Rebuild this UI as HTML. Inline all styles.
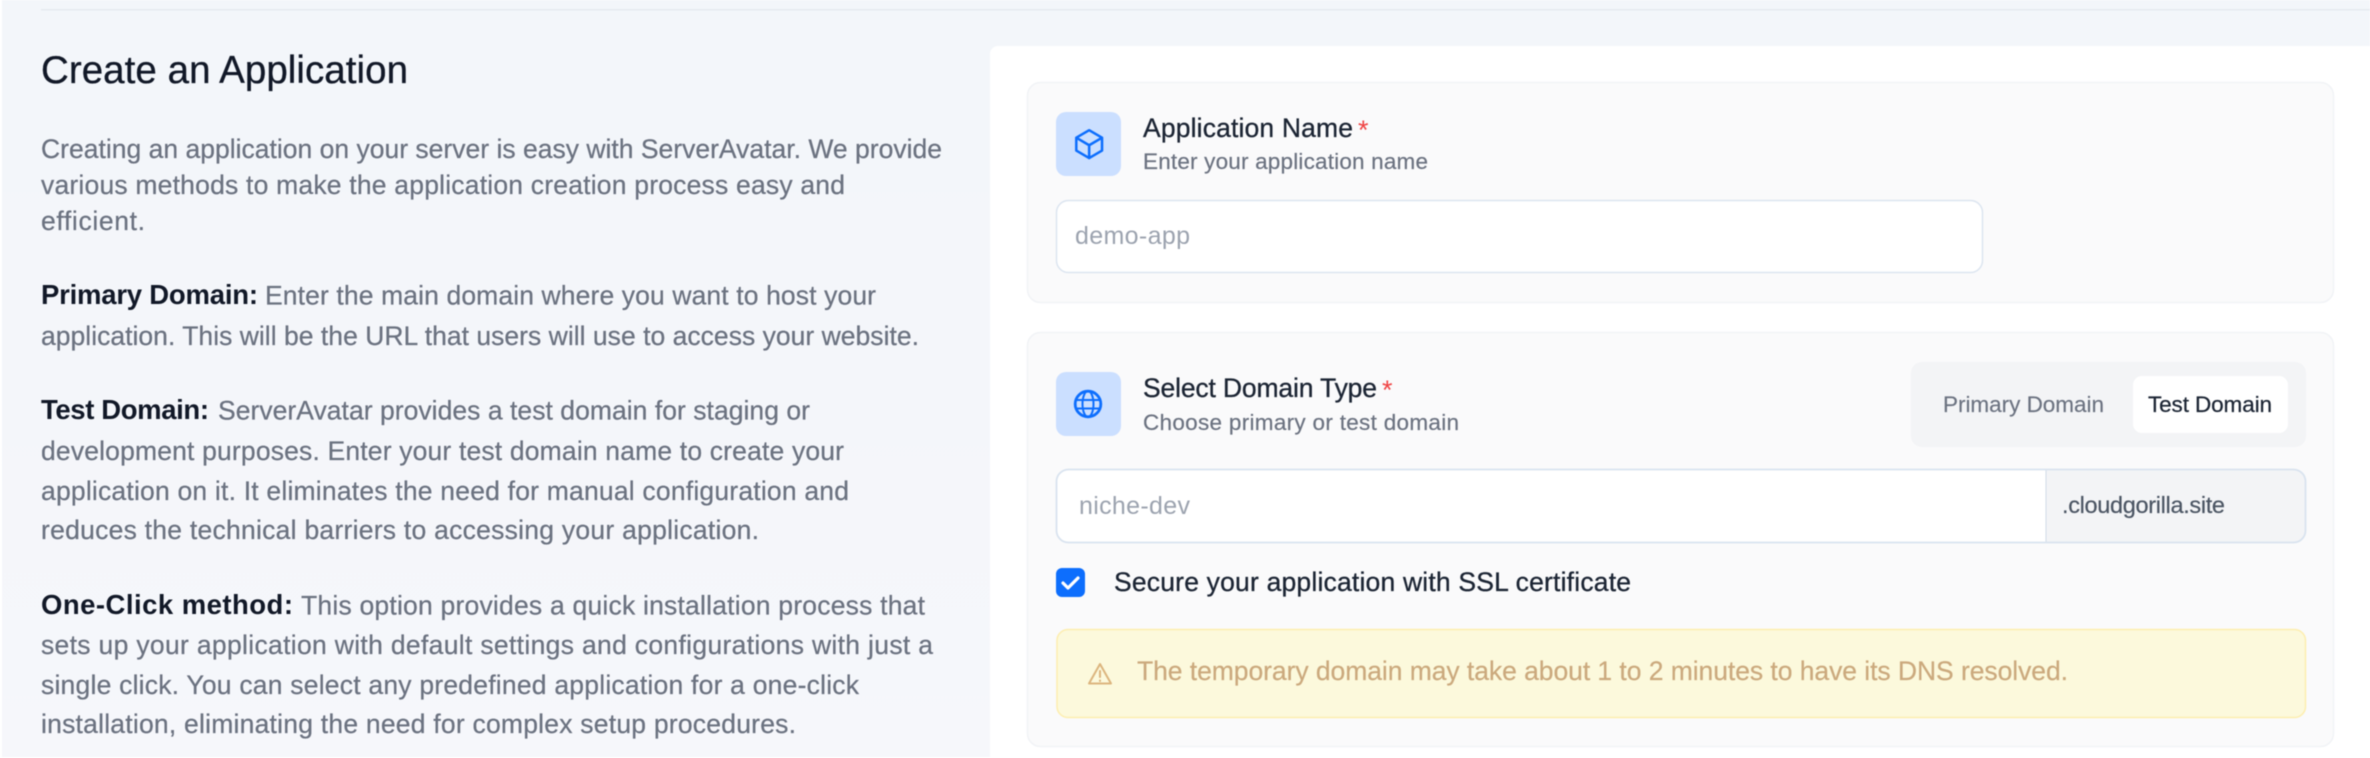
<!DOCTYPE html>
<html><head><meta charset="utf-8"><title>Create an Application</title>
<style>
html,body{margin:0;padding:0;width:2370px;height:758px;overflow:hidden;background:#fff}
svg{display:block;font-family:"Liberation Sans",sans-serif;filter:blur(.4px)}
.p{font-size:26.5px;fill:#6b7280;stroke:#6b7280;stroke-width:.25px}
.b{font-size:27.5px;fill:#111827;font-weight:700}
.t{font-size:26.5px;fill:#1b2433;stroke:#1b2433;stroke-width:.3px}
.s{font-size:22.5px;fill:#6b7280;stroke:#6b7280;stroke-width:.2px}
</style></head><body>
<svg width="2370" height="758" viewBox="0 0 2370 758" xmlns="http://www.w3.org/2000/svg">
<defs><linearGradient id="bg" x1="0" y1="0" x2="0" y2="1"><stop offset="0" stop-color="#f3f6fa"/><stop offset="1" stop-color="#f6f7fb"/></linearGradient></defs>
<rect x="2" y="0" width="2368" height="757" fill="url(#bg)"/>
<rect x="41" y="9" width="2329" height="1.5" fill="#e6eaf0"/>
<path d="M998 46H2370V758H990V54a8 8 0 0 1 8-8z" fill="#fff"/>

<text x="41" y="83" font-size="38.5" fill="#111827" stroke="#111827" stroke-width=".3" textLength="367" lengthAdjust="spacing">Create an Application</text>

<text class="p" x="41" y="158" textLength="901" lengthAdjust="spacing">Creating an application on your server is easy with ServerAvatar. We provide</text>
<text class="p" x="41" y="194" textLength="804" lengthAdjust="spacing">various methods to make the application creation process easy and</text>
<text class="p" x="41" y="230" textLength="104" lengthAdjust="spacing">efficient.</text>

<text class="b" x="41" y="304" textLength="217" lengthAdjust="spacing">Primary Domain:</text>
<text class="p" x="265" y="304.500" textLength="611" lengthAdjust="spacing">Enter the main domain where you want to host your</text>
<text class="p" x="41" y="345" textLength="878" lengthAdjust="spacing">application. This will be the URL that users will use to access your website.</text>

<text class="b" x="41" y="419" textLength="168" lengthAdjust="spacing">Test Domain:</text>
<text class="p" x="218" y="419.500" textLength="592" lengthAdjust="spacing">ServerAvatar provides a test domain for staging or</text>
<text class="p" x="41" y="460" textLength="803" lengthAdjust="spacing">development purposes. Enter your test domain name to create your</text>
<text class="p" x="41" y="500" textLength="808" lengthAdjust="spacing">application on it. It eliminates the need for manual configuration and</text>
<text class="p" x="41" y="539" textLength="718" lengthAdjust="spacing">reduces the technical barriers to accessing your application.</text>

<text class="b" x="41" y="614" textLength="252" lengthAdjust="spacing">One-Click method:</text>
<text class="p" x="301" y="614.500" textLength="624" lengthAdjust="spacing">This option provides a quick installation process that</text>
<text class="p" x="41" y="654" textLength="892" lengthAdjust="spacing">sets up your application with default settings and configurations with just a</text>
<text class="p" x="41" y="694" textLength="818" lengthAdjust="spacing">single click. You can select any predefined application for a one-click</text>
<text class="p" x="41" y="733" textLength="755" lengthAdjust="spacing">installation, eliminating the need for complex setup procedures.</text>

<!-- Card 1 -->
<rect x="1027.5" y="82.5" width="1306" height="220" rx="13" fill="#fafafb" stroke="#f1f3f6" stroke-width="1.5"/>
<rect x="1056" y="112" width="65" height="64" rx="10" fill="#cbdfff"/>
<g transform="translate(1072,127) scale(1.43)" fill="none" stroke="#0d6efd" stroke-width="1.75" stroke-linecap="round" stroke-linejoin="round">
<path d="M21 7.5l-9-5.25L3 7.5v9l9 5.25 9-5.25zM3 7.5l9 5.25 9-5.25M12 12.75v9"/>
</g>
<text class="t" x="1143" y="137" textLength="210" lengthAdjust="spacing">Application Name</text>
<text x="1358" y="139" font-size="27" fill="#f04444">*</text>
<text class="s" x="1143" y="169" textLength="285" lengthAdjust="spacing">Enter your application name</text>
<rect x="1056.5" y="200.5" width="926" height="72" rx="12" fill="#fff" stroke="#dce5f0" stroke-width="1.5"/>
<text x="1075" y="244" font-size="25" fill="#9ca3af" textLength="115" lengthAdjust="spacing">demo-app</text>

<!-- Card 2 -->
<rect x="1027.5" y="332.5" width="1306" height="414" rx="13" fill="#fafafb" stroke="#f1f3f6" stroke-width="1.5"/>
<rect x="1056" y="372" width="65" height="64" rx="10" fill="#cbdfff"/>
<g fill="none" stroke="#0d6efd">
<circle cx="1088" cy="404" r="12.8" stroke-width="2.8"/>
<ellipse cx="1088" cy="404" rx="5.5" ry="13" stroke-width="2"/>
<path d="M1075 400h26M1075 408.500h26" stroke-width="2"/>
</g>
<text class="t" x="1143" y="397" textLength="234" lengthAdjust="spacing">Select Domain Type</text>
<text x="1382" y="399" font-size="27" fill="#f04444">*</text>
<text class="s" x="1143" y="430" textLength="316" lengthAdjust="spacing">Choose primary or test domain</text>

<rect x="1911" y="362" width="395" height="85" rx="11" fill="#f3f4f6"/>
<rect x="2133" y="376" width="155" height="57" rx="9" fill="#fff"/>
<text x="1943" y="412" font-size="22.5" fill="#6b7280" stroke="#6b7280" stroke-width=".15" textLength="161" lengthAdjust="spacing">Primary Domain</text>
<text x="2148" y="412" font-size="22.5" fill="#1b2433" stroke="#1b2433" stroke-width=".25" textLength="124" lengthAdjust="spacing">Test Domain</text>

<rect x="1056.5" y="469.5" width="1249" height="73" rx="12" fill="#fff"/>
<path d="M2046 470H2293a12 12 0 0 1 12 12V530a12 12 0 0 1-12 12H2046z" fill="#f3f4f6"/>
<rect x="2045.5" y="470" width="1" height="72" fill="#d0dbe8"/>
<rect x="1056.500" y="469.5" width="1249" height="73" rx="12" fill="none" stroke="#d9e3ef" stroke-width="1.8"/>
<text x="1079" y="514" font-size="25" fill="#9ca3af" textLength="111" lengthAdjust="spacing">niche-dev</text>
<text x="2062" y="513" font-size="23.500" fill="#4b5563" stroke="#4b5563" stroke-width=".2" textLength="163" lengthAdjust="spacing">.cloudgorilla.site</text>

<rect x="1056" y="568" width="29" height="29" rx="6" fill="#0d6efd"/>
<polyline points="1063,583 1068,588 1078,578" fill="none" stroke="#fff" stroke-width="3.2" stroke-linecap="round" stroke-linejoin="round"/>
<text class="t" x="1114" y="591" textLength="517" lengthAdjust="spacing">Secure your application with SSL certificate</text>

<rect x="1057" y="629.5" width="1248.5" height="88" rx="11" fill="#fcf9dc" stroke="#fdeeb0" stroke-width="1.5"/>
<g fill="none" stroke="#dcb57e" stroke-width="2" stroke-linejoin="round" stroke-linecap="round">
<path d="M1100 664l11 19.5h-22z"/>
<path d="M1100 671v6"/>
<path d="M1100 680.5v.5"/>
</g>
<text x="1137" y="680" font-size="26.500" fill="#cba97d" stroke="#cba97d" stroke-width=".2" textLength="931" lengthAdjust="spacing">The temporary domain may take about 1 to 2 minutes to have its DNS resolved.</text>
</svg>
</body></html>
